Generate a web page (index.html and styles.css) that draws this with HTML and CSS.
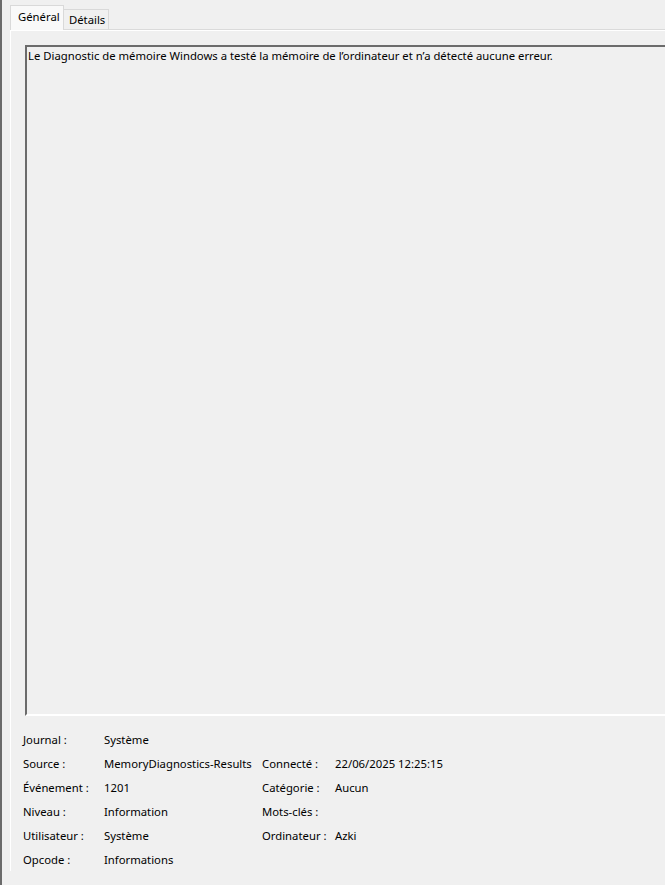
FILE: index.html
```html
<!DOCTYPE html>
<html lang="fr">
<head>
<meta charset="utf-8">
<link rel="stylesheet" href="styles.css">
</head>
<body>
<div class="window">
  <div class="tabs">
    <div class="tab active">Général</div>
    <div class="tab">Détails</div>
  </div>
  <div class="panel">
    <div class="textbox">Le Diagnostic de mémoire Windows a testé la mémoire de l’ordinateur et n’a détecté aucune erreur.</div>
    <div class="props">
      <div class="lbl">Journal :</div><div class="val">Système</div><div class="lbl2"></div><div class="val"></div>
      <div class="lbl">Source :</div><div class="val">MemoryDiagnostics-Results</div><div class="lbl2">Connecté :</div><div class="val">22/06/2025 12:25:15</div>
      <div class="lbl">Événement :</div><div class="val">1201</div><div class="lbl2">Catégorie :</div><div class="val">Aucun</div>
      <div class="lbl">Niveau :</div><div class="val">Information</div><div class="lbl2">Mots-clés :</div><div class="val"></div>
      <div class="lbl">Utilisateur :</div><div class="val">Système</div><div class="lbl2">Ordinateur :</div><div class="val">Azki</div>
      <div class="lbl">Opcode :</div><div class="val">Informations</div><div class="lbl2"></div><div class="val"></div>
    </div>
  </div>
</div>
</body>
</html>
```
FILE: styles.css
```css
html, body {
  margin: 0;
  padding: 0;
  background: #f0f0f0;
}
body {
  width: 665px;
  height: 885px;
  overflow: hidden;
  font-family: "Noto Sans", "Liberation Sans", sans-serif;
  font-size: 11.3px;
  color: #000;
}
.window {
  height: 885px;
  border-left: 2px solid #6b6b6b;
  padding-left: 8px;
  box-sizing: border-box;
}
.tabs {
  display: flex;
  align-items: flex-end;
  height: 29px;
  padding-top: 6px;
  box-sizing: border-box;
  position: relative;
  z-index: 1;
}
.tab {
  height: 20px;
  line-height: 19px;
  padding: 0 0 0 5px;
  border: 1px solid #d9d9d9;
  border-bottom: none;
  background: #f0f0f0;
  box-sizing: border-box;
}
.tab.active {
  width: 54px;
  height: 25px;
  line-height: 21px;
  padding: 0 0 0 7px;
  background: #f9f9f9;
  margin-bottom: -1px;
}
.tab:not(.active) {
  width: 45px;
  border-left: none;
}
.panel {
  border-top: 1px solid #dadada;
  border-left: 1px solid #ffffff;
  box-shadow: inset 0 1px 0 #ffffff;
  padding-top: 15px;
}
.textbox {
  margin-left: 14px;
  height: 671px;
  box-sizing: border-box;
  border-top: 2px solid #6b6b6b;
  border-left: 2px solid #6b6b6b;
  border-bottom: 2px solid #ffffff;
  padding: 1px 0 0 1px;
  line-height: 16px;
  white-space: nowrap;
}
.props {
  display: grid;
  grid-template-columns: 81px 158px 73px 1fr;
  grid-auto-rows: 24px;
  align-items: center;
  margin: 11px 0 0 12px;
}
```
